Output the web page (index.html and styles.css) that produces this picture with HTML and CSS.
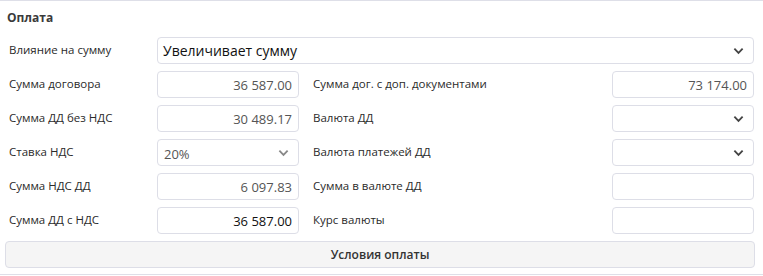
FILE: index.html
```html
<!DOCTYPE html>
<html lang="ru">
<head>
    <meta charset="UTF-8">
    <meta name="viewport" content="width=device-width, initial-scale=1.0">
    <title>Оплата</title>
    <link rel="stylesheet" href="styles.css">
</head>
<body>
    <div class="panel">
        <div class="panel-title">Оплата</div>
        <div class="form-grid">
            <label class="lbl">Влияние на сумму</label>
            <div class="field select wide main">
                <span>Увеличивает сумму</span>
                <svg class="chev" viewBox="0 0 12 8"><path d="M1.5 1.5 L6 6 L10.5 1.5" /></svg>
            </div>

            <label class="lbl">Сумма договора</label>
            <div class="field num">36 587.00</div>
            <label class="lbl right">Сумма дог. с доп. документами</label>
            <div class="field num">73 174.00</div>

            <label class="lbl">Сумма ДД без НДС</label>
            <div class="field num">30 489.17</div>
            <label class="lbl right">Валюта ДД</label>
            <div class="field select">
                <span></span>
                <svg class="chev" viewBox="0 0 12 8"><path d="M1.5 1.5 L6 6 L10.5 1.5" /></svg>
            </div>

            <label class="lbl">Ставка НДС</label>
            <div class="field select light">
                <span>20%</span>
                <svg class="chev" viewBox="0 0 12 8"><path d="M1.5 1.5 L6 6 L10.5 1.5" /></svg>
            </div>
            <label class="lbl right">Валюта платежей ДД</label>
            <div class="field select">
                <span></span>
                <svg class="chev" viewBox="0 0 12 8"><path d="M1.5 1.5 L6 6 L10.5 1.5" /></svg>
            </div>

            <label class="lbl">Сумма НДС ДД</label>
            <div class="field num">6 097.83</div>
            <label class="lbl right">Сумма в валюте ДД</label>
            <div class="field"></div>

            <label class="lbl">Сумма ДД с НДС</label>
            <div class="field num dark">36 587.00</div>
            <label class="lbl right">Курс валюты</label>
            <div class="field"></div>
        </div>
        <button class="btn">Условия оплаты</button>
    </div>
</body>
</html>
```

FILE: styles.css
```css
body, html {
    margin: 0;
    padding: 0;
    background-color: #ffffff;
    font-family: "Open Sans", Arial, sans-serif;
    color: #333;
}
.panel {
    width: 756px;
    height: 268px;
    padding: 0 6px 5px 5px;
    border: 1px solid #dedfe8;
    border-left: 0;
    background: #fff;
}
.panel-title {
    font-size: 12px;
    font-weight: 700;
    line-height: 18px;
    padding: 8px 0 0 2px;
    margin-bottom: 10px;
    color: #3a3a3a;
}
.form-grid {
    display: grid;
    grid-template-columns: 149px 142px 313px 142px;
    grid-auto-rows: 27px;
    row-gap: 7px;
    padding: 0 1px 0 3px;
}
.lbl {
    font-size: 11.5px;
    display: flex;
    align-items: center;
    padding-left: 1px;
    padding-bottom: 2px;
    color: #2a2a2a;
}
.lbl.right {
    padding-left: 14px;
}
.field {
    box-sizing: border-box;
    border: 1px solid #dddee7;
    border-radius: 4px;
    background: #fff;
    font-size: 13px;
    display: flex;
    align-items: center;
    padding: 0 6px;
    color: #555;
}
.field.num {
    justify-content: flex-end;
}
.field.dark {
    color: #111;
}
.field.wide {
    grid-column: 2 / 5;
}
.field.main {
    font-size: 14px;
    color: #111;
    padding-left: 5px;
}
.select {
    justify-content: space-between;
}
.chev {
    width: 11px;
    height: 8px;
    margin-right: 3px;
    fill: none;
    stroke: #444;
    stroke-width: 2;
}
.light .chev {
    stroke: #888;
}
.light span {
    margin-top: 3px;
}
.btn {
    display: block;
    width: 750px;
    height: 27px;
    margin-top: 7px;
    border: 1px solid #dddee7;
    border-radius: 4px;
    background: #f5f5f5;
    font-family: "Open Sans", Arial, sans-serif;
    font-size: 12px;
    font-weight: 600;
    color: #333;
    padding: 0;
}
```
